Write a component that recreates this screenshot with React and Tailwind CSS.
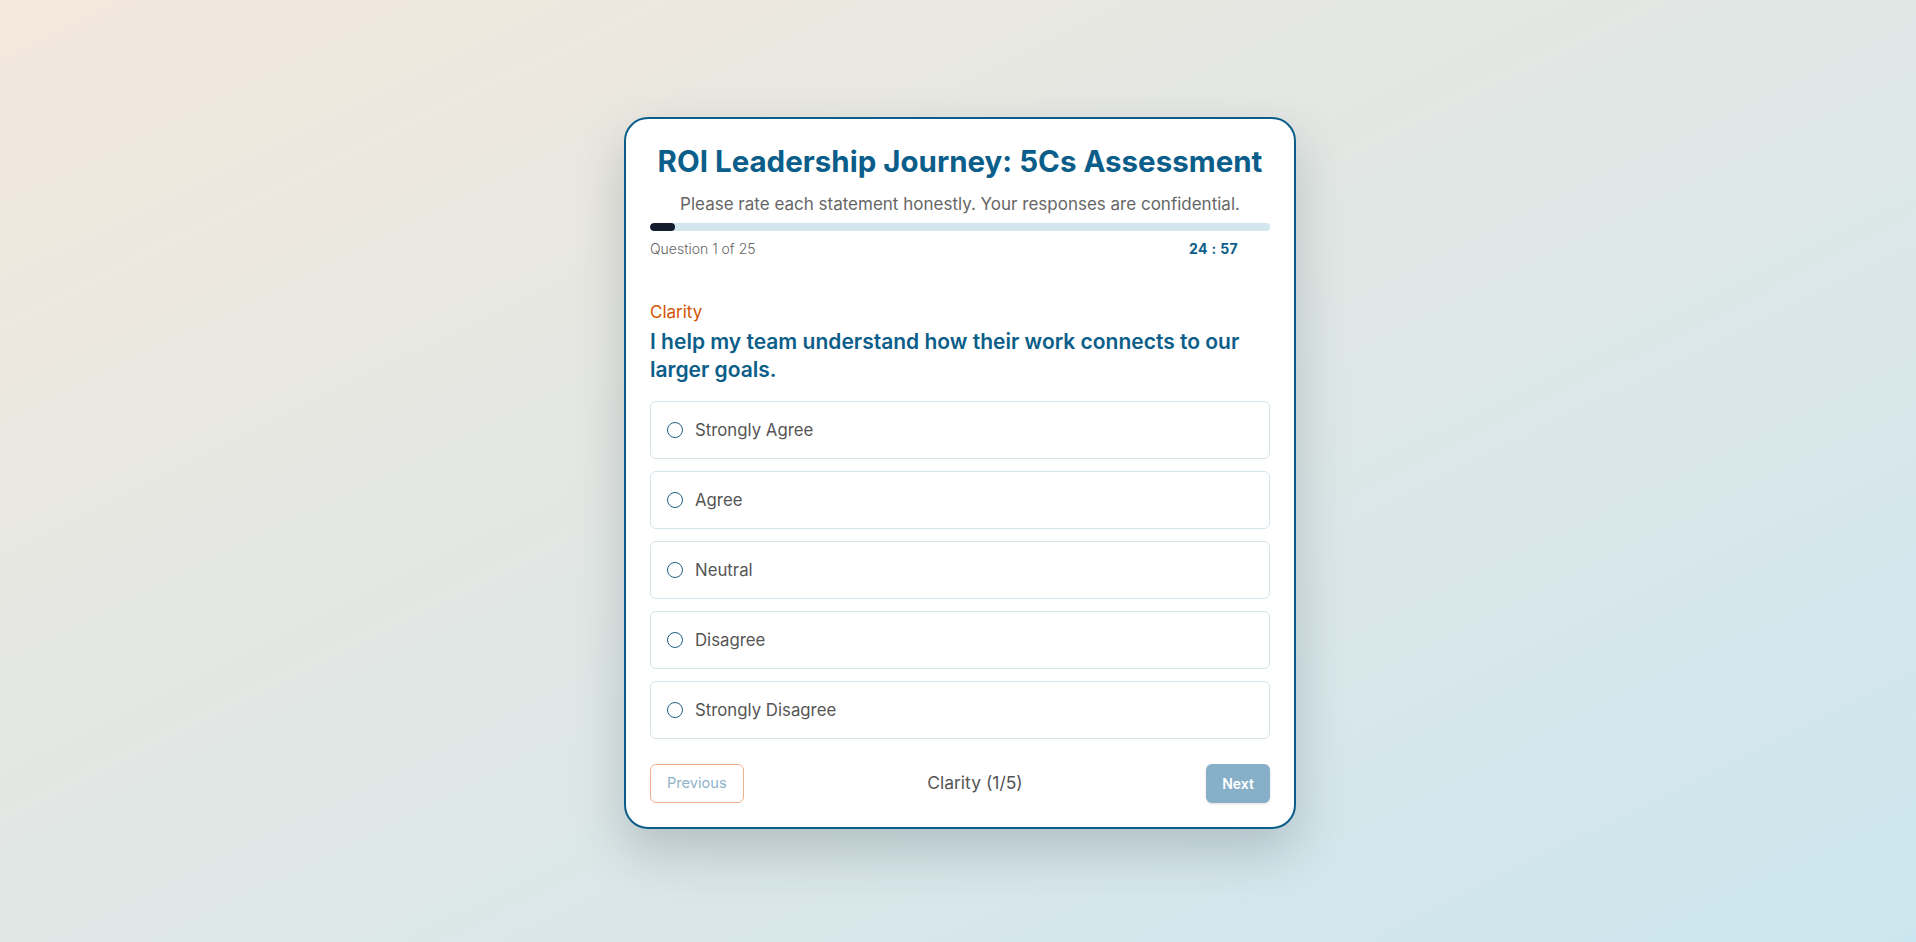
import React from "react";

const options = ["Strongly Agree", "Agree", "Neutral", "Disagree", "Strongly Disagree"];

export default function App() {
  return (
    <div
      className="min-h-screen w-full flex items-center justify-center pl-[4px] pt-[3px] bg-linear-to-br from-[#f3e8dc] to-[#cce6ef]"
      style={{ fontFamily: "Inter, 'Open Sans', sans-serif" }}
    >
      <div className="w-[672px] bg-white border-2 border-[#0b5e89] rounded-[24px] p-6 shadow-[0_22px_50px_rgba(40,60,70,0.22)]">
        <h1 className="text-center text-[29.5px] leading-[36px] font-bold text-[#0b5e89]">
          ROI Leadership Journey: 5Cs Assessment
        </h1>
        <p className="mt-[13px] text-center text-[17px] leading-6 text-[#666666]">
          Please rate each statement honestly. Your responses are confidential.
        </p>
        <div className="mt-[7px] h-2 w-full rounded-full bg-[#d3e6ee] overflow-hidden">
          <div className="h-full w-[4%] rounded-full bg-[#141b2d]" />
        </div>
        <div className="mt-2 flex items-center justify-between">
          <span className="text-[14px] leading-5 font-light text-[#666666]">Question 1 of 25</span>
          <span className="mr-8 text-[14px] leading-5 font-bold tracking-wide text-[#0b5e89]">24 : 57</span>
        </div>

        <div className="mt-[42px] text-[17px] leading-[22px] text-[#d35400]">Clarity</div>
        <h2 className="mt-[5px] text-[21px] leading-[28px] font-semibold text-[#0b5e89]">
          I help my team understand how their work connects to our larger goals.
        </h2>

        <div className="mt-[17px] flex flex-col gap-3">
          {options.map((o) => (
            <label
              key={o}
              className="flex items-center gap-3 rounded-md border border-[#d4e4ea] bg-white px-4 py-4 cursor-pointer"
            >
              <span className="h-4 w-4 shrink-0 rounded-full border-[1.5px] border-[#1f5f85]" />
              <span className="text-[16.8px] leading-6 text-[#555555]">{o}</span>
            </label>
          ))}
        </div>

        <div className="mt-[25px] flex items-center justify-between">
          <button className="rounded-md border border-[#f0b08e] bg-white px-4 py-2 text-[14.6px] leading-[21px] text-[#8fb3c9]">
            Previous
          </button>
          <span className="text-[17.5px] leading-6 text-[#555555]">Clarity (1/5)</span>
          <button className="rounded-md bg-[#87b0c8] px-4 py-2 text-[14px] leading-[23px] font-semibold text-white shadow-sm">
            Next
          </button>
        </div>
      </div>
    </div>
  );
}
